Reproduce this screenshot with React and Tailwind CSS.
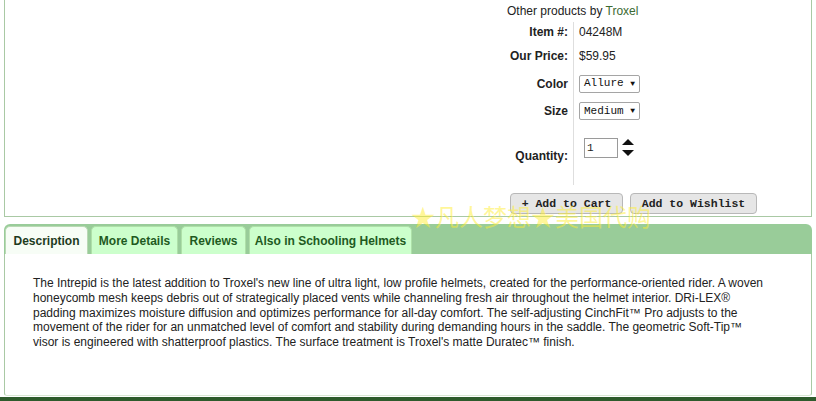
import React from 'react'

const lines = [
  "The Intrepid is the latest addition to Troxel's new line of ultra light, low profile helmets, created for the performance-oriented rider. A woven",
  'honeycomb mesh keeps debris out of strategically placed vents while channeling fresh air throughout the helmet interior. DRi-LEX®',
  'padding maximizes moisture diffusion and optimizes performance for all-day comfort. The self-adjusting CinchFit™ Pro adjusts to the',
  'movement of the rider for an unmatched level of comfort and stability during demanding hours in the saddle. The geometric Soft-Tip™',
  "visor is engineered with shatterproof plastics. The surface treatment is Troxel's matte Duratec™ finish.",
]

function FakeSelect({ value }) {
  return (
    <div className="w-[61px] h-[18px] border border-[#a5a5a5] rounded-[2px] bg-white flex items-center justify-between px-[4px] font-['Liberation_Mono'] text-[11px] text-[#111]">
      <span>{value}</span>
      <span className="text-[8px]">▼</span>
    </div>
  )
}

function Tab({ label, active, width }) {
  return (
    <div
      className={
        'h-[28px] flex items-center justify-center rounded-t-[5px] text-[12px] font-bold ' +
        width +
        (active
          ? ' bg-[#f7fdf6] text-[#1d3b1d] border-t border-x border-[#b9d9b4]'
          : ' bg-[#ccffcc] text-[#1f5a1f] border-t border-x border-[#aee0a8]')
      }
    >
      {label}
    </div>
  )
}

export default function App() {
  return (
    <div className="relative w-[816px] h-[401px] bg-white overflow-hidden font-['Liberation_Sans',Arial,sans-serif]">
      {/* product box */}
      <div className="mx-[4px] w-[808px] h-[217px] border-x border-b border-[#a9c9a4] flex">
        <div className="w-[495px]"></div>
        <div className="flex flex-col">
          <div className="pl-[7px] pt-[4px] text-[12px] text-[#222] leading-[15px]">
            Other products by <span className="text-[#3b6a32]">Troxel</span>
          </div>
          <div className="grid grid-cols-[74px_1fr] mt-[3px] text-[12px] text-[#222]">
            <div className="h-[20px] flex items-center justify-end pr-[5px] font-bold border-r border-[#dedede]">Item #:</div>
            <div className="h-[20px] flex items-center pl-[5px]">04248M</div>
            <div className="h-[28px] flex items-center justify-end pr-[5px] font-bold border-r border-[#dedede]">Our Price:</div>
            <div className="h-[28px] flex items-center pl-[5px]">$59.95</div>
            <div className="h-[27px] flex items-center justify-end pr-[5px] font-bold border-r border-[#dedede]">Color</div>
            <div className="h-[27px] flex items-center pl-[5px]"><FakeSelect value="Allure" /></div>
            <div className="h-[28px] flex items-center justify-end pr-[5px] font-bold border-r border-[#dedede]">Size</div>
            <div className="h-[28px] flex items-center pl-[5px]"><FakeSelect value="Medium" /></div>
            <div className="h-[60px] flex items-center justify-end pr-[5px] font-bold border-r border-[#dedede] pt-[1px]">Quantity:</div>
            <div className="h-[60px] flex items-start pl-[10px] pt-[13px] gap-[4px]">
              <div className="w-[34px] h-[20px] border border-[#9a9a9a] flex items-center px-[2px] font-['Liberation_Mono'] text-[11px]">1</div>
              <svg width="12" height="20" viewBox="0 0 12 20">
                <polygon points="6,1 12,7 0,7" fill="#111" />
                <polygon points="0,12 12,12 6,18" fill="#111" />
              </svg>
            </div>
          </div>
          <div className="flex gap-[7px] pl-[10px] mt-[8px]">
            <div className="h-[21px] w-[113px] flex items-center justify-center rounded-[4px] border border-[#b8b8b8] bg-[#e6e6e6] font-['Liberation_Mono'] font-bold text-[11.5px] text-[#222]">+ Add to Cart</div>
            <div className="h-[21px] w-[127px] flex items-center justify-center rounded-[4px] border border-[#b8b8b8] bg-[#e6e6e6] font-['Liberation_Mono'] font-bold text-[11.5px] text-[#222]">Add to Wishlist</div>
          </div>
        </div>
      </div>

      {/* tabs */}
      <div className="mx-[4px] mt-[7px] w-[808px] h-[30px] bg-[#99cc99] rounded-t-[6px] flex items-end gap-[3px] pl-[1px]">
        <Tab label="Description" active width="w-[83px]" />
        <Tab label="More Details" width="w-[87px]" />
        <Tab label="Reviews" width="w-[65px]" />
        <Tab label="Also in Schooling Helmets" width="w-[163px]" />
      </div>

      {/* description */}
      <div className="mx-[4px] w-[808px] h-[142px] border-x border-[#a9c9a4] border-b border-b-[#d8e8d4] rounded-b-[3px] pl-[28px] pt-[22px] text-[12px] leading-[14.8px] text-[#222]">
        {lines.map((l) => (
          <div key={l} className="whitespace-nowrap">{l}</div>
        ))}
      </div>
      <div className="mt-[1px] h-[5px] bg-[#2e5b2c]"></div>

      {/* watermark */}
      <div className="absolute left-[411px] top-[202px] text-[24px] leading-[28px] text-[#ffee33]/50 font-['Noto_Sans_CJK_SC',sans-serif] whitespace-nowrap pointer-events-none">
        ★凡人梦想★美国代购
      </div>
    </div>
  )
}
